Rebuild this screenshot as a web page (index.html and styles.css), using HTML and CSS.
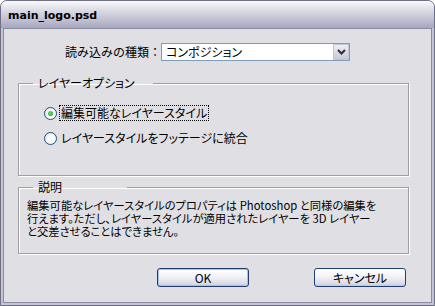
FILE: index.html
```html
<!DOCTYPE html>
<html lang="ja">
<head>
<meta charset="utf-8">
<link rel="stylesheet" href="styles.css">
</head>
<body>
<div class="window">
  <div class="titlebar"><span class="title">main_logo.psd</span></div>
  <div class="client">
    <div class="type-row">
      <span class="type-label">読み込みの種類：</span>
      <div class="select">
        <span class="select-value">コンポジション</span>
        <span class="select-btn"><svg width="9" height="6" viewBox="0 0 9 6"><path d="M1 1 L4.5 4.5 L8 1" fill="none" stroke="#2b2b3a" stroke-width="2"/></svg></span>
      </div>
    </div>
    <fieldset class="group group-options">
      <legend class="legend legend-options">レイヤーオプション</legend>
      <div class="radios">
        <div class="radio-row"><span class="radio checked"></span><span class="radio-label focus">編集可能なレイヤースタイル</span></div>
        <div class="radio-row"><span class="radio"></span><span class="radio-label">レイヤースタイルをフッテージに統合</span></div>
      </div>
    </fieldset>
    <fieldset class="group group-desc">
      <legend class="legend legend-desc">説明</legend>
      <p class="desc"><span class="line">編集可能なレイヤースタイルのプロパティは Photoshop と同様の編集を</span><span class="line">行えます。ただし、レイヤースタイルが適用されたレイヤーを 3D レイヤー</span><span class="line">と交差させることはできません。</span></p>
    </fieldset>
    <div class="buttons">
      <button class="btn btn-default">OK</button>
      <button class="btn">キャンセル</button>
    </div>
  </div>
</div>
</body>
</html>
```

FILE: styles.css
```css
html, body {
  margin: 0;
  padding: 0;
  background: #ffffff;
}
body {
  font-family: "Noto Sans CJK JP", "Noto Sans", sans-serif;
  font-size: 12px;
  color: #000;
}
.window {
  width: 435px;
  height: 306px;
  box-sizing: border-box;
  border: 1px solid #6f6f86;
  border-radius: 7px 7px 0 0;
  background: #c4c4d4;
  display: flex;
  flex-direction: column;
  overflow: hidden;
}
.titlebar {
  height: 27px;
  flex: 0 0 27px;
  display: flex;
  align-items: center;
  padding-left: 7px;
  background: linear-gradient(#fbfbfd 0%, #e9e9f0 18%, #cfcfdd 50%, #b8b8cc 80%, #a6a6bd 100%);
}
.title {
  font-family: "DejaVu Sans", sans-serif;
  font-weight: bold;
  font-size: 11px;
  color: #000;
  padding-top: 1px;
}
.client {
  flex: 1;
  margin: 0 2px 2px 2px;
  border: 1px solid #8a8aa0;
  background: #e0dfe3;
  display: flex;
  flex-direction: column;
}
.type-row {
  display: flex;
  align-items: center;
  margin-top: 14px;
  height: 18px;
}
.type-label {
  flex: 0 0 157px;
  text-align: right;
  line-height: 18px;
}
.select {
  width: 189px;
  height: 18px;
  box-sizing: border-box;
  border: 1px solid #7f9db9;
  background: #fff;
  display: flex;
  align-items: center;
  justify-content: space-between;
}
.select-value {
  padding-left: 4px;
  line-height: 16px;
  font-feature-settings: "palt";
}
.select-btn {
  width: 16px;
  height: 16px;
  box-sizing: border-box;
  border: 1px solid #c0c6d6;
  background: linear-gradient(#eeeef4, #c9c9d8);
  display: flex;
  align-items: center;
  justify-content: center;
}
.group {
  margin: 0 0 0 14px;
  width: 391px;
  box-sizing: border-box;
  padding: 0;
  border: 1px solid #9e9ea4;
  box-shadow: 1px 1px 0 #ffffff, inset 1px 1px 0 #ffffff;
  min-width: 0;
}
.group-options {
  margin-top: 16px;
}
.group-desc {
  margin-top: 5px;
}
.legend {
  box-sizing: border-box;
  margin-left: 14px;
  padding: 0 0 0 5px;
  line-height: 12px;
  font-feature-settings: "palt";
}
.legend-options {
  width: 120px;
}
.legend-desc {
  width: 94px;
}
.radios {
  display: flex;
  flex-direction: column;
  gap: 9px;
  padding: 16px 0 29px 25px;
}
.radio-row {
  display: flex;
  align-items: center;
  height: 16px;
  gap: 2px;
}
.radio {
  width: 13px;
  height: 13px;
  box-sizing: border-box;
  border-radius: 50%;
  border: 1px solid #1d5281;
  background: radial-gradient(circle at 60% 60%, #ffffff 30%, #dcdcd6 100%);
  display: flex;
  align-items: center;
  justify-content: center;
}
.radio.checked::after {
  content: "";
  width: 5px;
  height: 5px;
  border-radius: 50%;
  background: radial-gradient(circle at 40% 40%, #6be06b, #1f961f);
}
.radio-label {
  padding: 0 1px;
  line-height: 14px;
  border: 1px solid transparent;
  font-feature-settings: "palt";
}
.radio-label.focus {
  border: 1px dotted #000;
}
.desc {
  margin: 0;
  padding: 6px 0 15px 8px;
  display: flex;
  flex-direction: column;
  font-size: 11.3px;
  white-space: nowrap;
  font-feature-settings: "palt";
}
.line {
  display: block;
  height: 13px;
  line-height: 13px;
  overflow: visible;
}
.buttons {
  display: flex;
  justify-content: flex-end;
  gap: 65px;
  margin-top: 14px;
  padding-right: 25px;
}
.btn {
  width: 92px;
  height: 19px;
  box-sizing: border-box;
  border: 1px solid #1e3e73;
  border-radius: 3px;
  background: linear-gradient(#ffffff 0%, #f4f4f8 40%, #dcdce8 85%, #c6c6d8 100%);
  font-family: "Noto Sans CJK JP", "Noto Sans", sans-serif;
  font-size: 12px;
  line-height: 15px;
  padding: 0;
  color: #000;
  font-feature-settings: "palt";
}
.btn-default {
  box-shadow: inset 0 0 0 1px #a7c2ec;
}
```
